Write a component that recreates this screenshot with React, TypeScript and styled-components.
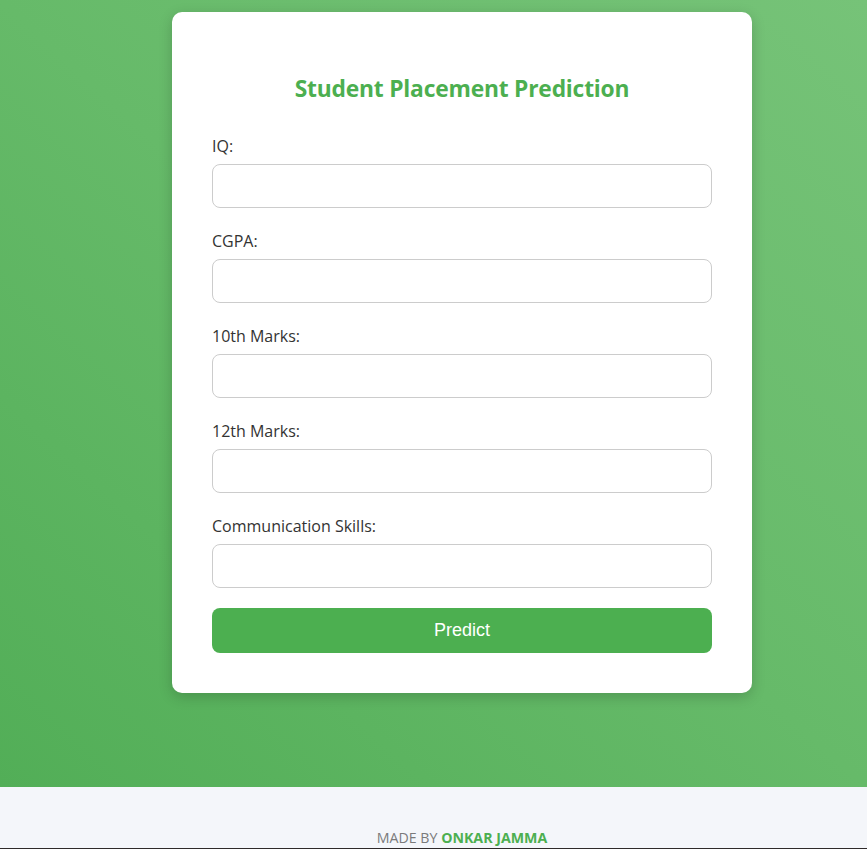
import React from "react";
import styled, { createGlobalStyle } from "styled-components";

const Global = createGlobalStyle`
  html, body { margin: 0; padding: 0; overflow: hidden; }
  body { font-family: "Open Sans", "Noto Sans", sans-serif; background: #f4f6fa; }
`;

const Page = styled.div`
  display: flex;
  flex-direction: column;
`;

const Hero = styled.main`
  height: 787px;
  box-sizing: border-box;
  padding: 12px 0 0 57px;
  display: flex;
  justify-content: center;
  align-items: flex-start;
  background: linear-gradient(to top right, #52ae57 0%, #66ba69 50%, #76c378 100%);
`;

const Card = styled.section`
  width: 580px;
  box-sizing: border-box;
  padding: 40px;
  background: #ffffff;
  border-radius: 10px;
  box-shadow: 0 4px 14px rgba(0, 0, 0, 0.18);
`;

const Title = styled.h2`
  margin: 21px 0 31px;
  font-size: 22.8px;
  line-height: 32px;
  font-weight: 700;
  text-align: center;
  color: #4caf50;
  letter-spacing: -0.2px;
`;

const Form = styled.form`
  display: flex;
  flex-direction: column;
`;

const Field = styled.div<{ $last?: boolean }>`
  display: flex;
  flex-direction: column;
  margin-bottom: ${(p) => (p.$last ? "20px" : "23px")};
`;

const Label = styled.label`
  font-size: 16px;
  line-height: 21px;
  color: #333333;
  margin-bottom: 7px;
`;

const Input = styled.input`
  height: 44px;
  box-sizing: border-box;
  border: 1px solid #cccccc;
  border-radius: 8px;
  padding: 0 12px;
  font-size: 16px;
  font-family: inherit;
  outline: none;
`;

const Button = styled.button`
  height: 45px;
  border: none;
  border-radius: 8px;
  background: #4caf50;
  color: #ffffff;
  font-family: "Liberation Sans", Arial, sans-serif;
  font-size: 18px;
  cursor: pointer;
`;

const Footer = styled.footer`
  height: 62px;
  box-sizing: border-box;
  padding-left: 57px;
  background: #f4f6fa;
  border-bottom: 1px solid #2e2a2a;
  display: flex;
  align-items: flex-end;
  justify-content: center;
  overflow: hidden;
`;

const Credit = styled.p`
  margin: 0 0 0;
  font-size: 14.2px;
  line-height: 20px;
  color: #7a7a7a;
  text-transform: uppercase;
`;

const Author = styled.span`
  color: #4caf50;
  font-weight: 700;
`;

const fields = ["IQ:", "CGPA:", "10th Marks:", "12th Marks:", "Communication Skills:"];

export default function App() {
  return (
    <Page>
      <Global />
      <Hero>
        <Card>
          <Title>Student Placement Prediction</Title>
          <Form onSubmit={(e) => e.preventDefault()}>
            {fields.map((f, i) => (
              <Field key={f} $last={i === fields.length - 1}>
                <Label>{f}</Label>
                <Input type="text" />
              </Field>
            ))}
            <Button type="submit">Predict</Button>
          </Form>
        </Card>
      </Hero>
      <Footer>
        <Credit>
          Made by <Author>Onkar Jamma</Author>
        </Credit>
      </Footer>
    </Page>
  );
}
